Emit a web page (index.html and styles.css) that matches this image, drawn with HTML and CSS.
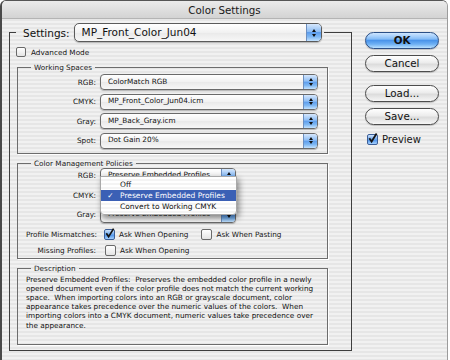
FILE: index.html
```html
<!DOCTYPE html>
<html>
<head>
<meta charset="utf-8">
<title>Color Settings</title>
<link rel="stylesheet" href="styles.css">
</head>
<body>
<div class="window">
  <div class="titlebar">Color Settings</div>
  <div class="content">
    <fieldset class="main">
      <legend class="settings-legend">
        <span class="settings-label">Settings:</span>
        <span class="popup popup-settings"><span class="popup-text">MP_Front_Color_Jun04</span><span class="stepper"><i class="up"></i><i class="down"></i></span></span>
      </legend>
      <div class="check-row adv"><span class="cb"></span><span>Advanced Mode</span></div>

      <fieldset class="group ws">
        <legend>Working Spaces</legend>
        <div class="rows">
          <div class="row"><span class="lbl">RGB:</span><span class="popup popup-wide"><span class="popup-text">ColorMatch RGB</span><span class="stepper"><i class="up"></i><i class="down"></i></span></span></div>
          <div class="row"><span class="lbl">CMYK:</span><span class="popup popup-wide"><span class="popup-text">MP_Front_Color_Jun04.icm</span><span class="stepper"><i class="up"></i><i class="down"></i></span></span></div>
          <div class="row"><span class="lbl">Gray:</span><span class="popup popup-wide"><span class="popup-text">MP_Back_Gray.icm</span><span class="stepper"><i class="up"></i><i class="down"></i></span></span></div>
          <div class="row"><span class="lbl">Spot:</span><span class="popup popup-wide"><span class="popup-text">Dot Gain 20%</span><span class="stepper"><i class="up"></i><i class="down"></i></span></span></div>
        </div>
      </fieldset>

      <fieldset class="group cmp">
        <legend>Color Management Policies</legend>
        <div class="rows">
          <div class="row"><span class="lbl">RGB:</span><span class="popup popup-short"><span class="popup-text">Preserve Embedded Profiles</span><span class="stepper"><i class="up"></i><i class="down"></i></span></span></div>
          <div class="row open"><span class="lbl">CMYK:</span><span class="popup popup-short"><span class="popup-text"></span><span class="stepper"><i class="up"></i><i class="down"></i></span></span>
            <div class="menu">
              <div class="item"><span class="mark"></span>Off</div>
              <div class="item sel"><span class="mark">✓</span>Preserve Embedded Profiles</div>
              <div class="item"><span class="mark"></span>Convert to Working CMYK</div>
            </div>
          </div>
          <div class="row"><span class="lbl">Gray:</span><span class="popup popup-short"><span class="popup-text">Preserve Embedded Profiles</span><span class="stepper"><i class="up"></i><i class="down"></i></span></span></div>
        </div>
        <div class="row chk mism"><span class="lbl">Profile Mismatches:</span><span class="cb on"><svg viewBox="0 0 11 11" width="11" height="11"><path d="M2.3 5.2 L4.6 8.6 L9.6 0.6" fill="none" stroke="#151515" stroke-width="1.7"/></svg></span><span class="opt">Ask When Opening</span><span class="cb"></span><span class="opt">Ask When Pasting</span></div>
        <div class="row chk miss"><span class="lbl">Missing Profiles:</span><span class="cb"></span><span class="opt">Ask When Opening</span></div>
      </fieldset>

      <fieldset class="group desc">
        <legend>Description</legend>
        <p>Preserve Embedded Profiles:&nbsp; Preserves the embedded color profile in a newly<br>opened document even if the color profile does not match the current working<br>space.&nbsp; When importing colors into an RGB or grayscale document, color<br>appearance takes precedence over the numeric values of the colors.&nbsp; When<br>importing colors into a CMYK document, numeric values take precedence over<br>the appearance.</p>
      </fieldset>
    </fieldset>

    <div class="buttons">
      <div class="btn default">OK</div>
      <div class="btn cancel">Cancel</div>
      <div class="btn load">Load...</div>
      <div class="btn save">Save...</div>
      <div class="check-row preview"><span class="cb on big"><svg viewBox="0 0 11 11" width="11" height="11"><path d="M2.3 5.2 L4.6 8.6 L9.6 0.6" fill="none" stroke="#151515" stroke-width="1.8"/></svg></span><span>Preview</span></div>
    </div>
  </div>
</div>
</body>
</html>
```

FILE: styles.css
```css
html, body {
  margin: 0;
  padding: 0;
  background: #ffffff;
}
body {
  width: 450px;
  height: 360px;
  overflow: hidden;
  font-family: "DejaVu Sans", "Liberation Sans", sans-serif;
  color: #161616;
}
.window {
  width: 448px;
  height: 362px;
  box-sizing: border-box;
  border-top: 1px solid #555;
  border-left: 2px solid #4a4a4a;
  border-right: 1px solid #9c9c9c;
  border-radius: 6px 6px 0 0;
  overflow: hidden;
  background: repeating-linear-gradient(to bottom, #f1f1f1 0 2px, #e6e6e6 2px 4px);
}
.titlebar {
  height: 17px;
  border-bottom: 1px solid #b4b4b4;
  background: linear-gradient(#ebebeb, #d3d3d3);
  text-align: center;
  font-size: 10.3px;
  line-height: 18px;
  color: #1a1a1a;
}
.content {
  display: flex;
  align-items: flex-start;
  padding-left: 7px;
}

/* fieldsets */
fieldset {
  margin: 0;
  min-width: 0;
}
.main {
  margin-top: 4px;
  width: 343px;
  height: 328px;
  box-sizing: border-box;
  border: 1px solid #3e3e3e;
  padding: 5px 23px 7px 7px;
}
.settings-legend {
  display: flex;
  align-items: center;
  padding: 0 2px 0 7px;
  margin-left: -1px;
  height: 19px;
}
.settings-label {
  font-size: 10.5px;
  margin-right: 4px;
  color: #111;
}
.group {
  border: 1px solid #6d6d6d;
  box-shadow: 1px 1px 0 #ffffff;
  padding: 0 9px 0 8px;
}
.group legend {
  font-size: 7.3px;
  line-height: 9px;
  height: 9px;
  padding: 0 3px;
  margin-left: 5px;
  color: #1c1c1c;
}
.ws {
  margin-top: 6px;
  padding-top: 2px;
  padding-bottom: 4px;
}
.cmp {
  margin-top: 5px;
  padding-bottom: 1px;
}
.desc {
  margin-top: 5px;
  height: 81px;
  box-sizing: border-box;
  padding-top: 2px;
}
.desc p {
  margin: 0;
  font-size: 7.3px;
  line-height: 9.2px;
  white-space: nowrap;
  color: #111;
}

/* rows */
.rows {
  display: flex;
  flex-direction: column;
  gap: 3.5px;
}
.row {
  display: flex;
  align-items: center;
  gap: 4px;
  font-size: 7.3px;
}
.lbl {
  width: 70px;
  flex: none;
  text-align: right;
  white-space: nowrap;
}
.open {
  position: relative;
}

/* popup buttons */
.popup {
  display: flex;
  align-items: center;
  height: 16px;
  box-sizing: border-box;
  border: 1px solid #6a6a6a;
  border-radius: 4px;
  background: linear-gradient(#ffffff, #f1f1f1 50%, #e9e9e9 51%, #f7f7f7);
  box-shadow: 0 1px 1px rgba(0, 0, 0, 0.25);
  padding-left: 7px;
  overflow: hidden;
  font-size: 7.3px;
  color: #111;
}
.popup-text {
  flex: 1;
  white-space: nowrap;
  overflow: hidden;
  line-height: 1.45;
}
.popup-wide { width: 218px; }
.popup-short { width: 136px; }
.popup-settings {
  width: 248px;
  height: 19px;
  border-radius: 5px;
  font-size: 10.5px;
  padding-left: 7px;
  border-color: #5a5a5a;
}
.stepper {
  align-self: stretch;
  width: 13px;
  flex: none;
  background: linear-gradient(#d6e7fc, #8dbdf4 45%, #5d9ded 50%, #7fb8f3 75%, #c3e2ff);
  border-left: 1px solid #6c8fc0;
  display: flex;
  flex-direction: column;
  align-items: center;
  justify-content: center;
  gap: 1.5px;
}
.popup-settings .stepper { width: 14px; gap: 2px; }
.up, .down {
  display: block;
  width: 0;
  height: 0;
  border-left: 2.5px solid transparent;
  border-right: 2.5px solid transparent;
}
.up { border-bottom: 3px solid #111; }
.down { border-top: 3px solid #111; }

/* menu */
.menu {
  position: absolute;
  left: 74px;
  top: -11px;
  width: 137px;
  box-sizing: border-box;
  padding: 2px 0;
  background: repeating-linear-gradient(to bottom, #ffffff 0 2px, #f4f4f4 2px 4px);
  border: 1px solid #a9a9a9;
  border-radius: 0 0 4px 4px;
  box-shadow: 2px 3px 6px rgba(0, 0, 0, 0.45);
  z-index: 5;
}
.item {
  display: flex;
  height: 11px;
  line-height: 11px;
  font-size: 7.5px;
  color: #111;
  white-space: nowrap;
}
.item .mark {
  width: 19px;
  text-align: center;
  flex: none;
}
.item.sel {
  background: #3b60b5;
  color: #ffffff;
}

/* checkboxes */
.check-row {
  display: flex;
  align-items: center;
  gap: 5px;
  font-size: 7.3px;
}
.adv {
  height: 10px;
  margin-left: -1px;
}
.cb {
  width: 10px;
  height: 10px;
  flex: none;
  box-sizing: border-box;
  border: 1px solid #6a6a6a;
  border-radius: 2px;
  background: linear-gradient(#ffffff, #e4e4e4);
  position: relative;
}
.cb svg {
  position: absolute;
  left: -1px;
  top: -2px;
}
.cb.on {
  border-color: #3c5f98;
  background: linear-gradient(#cfe3fb, #6aa6ee 50%, #4d92ea 55%, #a7d2ff);
}
.chk .cb {
  width: 11px;
  height: 11px;
  margin-left: 4px;
}
.chk .opt {
  margin-left: 0;
  margin-right: 5px;
  white-space: nowrap;
}
.mism {
  margin-top: 6px;
  height: 12px;
}
.miss {
  margin-top: 4px;
  height: 12px;
}
.miss .cb { margin-left: 5px; }

/* buttons */
.buttons {
  margin-left: 13px;
  margin-top: 13px;
  width: 74px;
  display: flex;
  flex-direction: column;
}
.btn {
  height: 17px;
  box-sizing: border-box;
  border: 1px solid #4c4c4c;
  border-radius: 9px;
  background: linear-gradient(#ffffff, #ececec 45%, #dcdcdc 55%, #f6f6f6);
  box-shadow: 0 1px 1px rgba(0, 0, 0, 0.2);
  text-align: center;
  font-size: 10.3px;
  line-height: 15px;
  color: #111;
}
.btn.default {
  border-color: #2b4f86;
  background: linear-gradient(#cfe6ff, #86bdf7 40%, #4a94ea 50%, #6fb1f4 75%, #b9e0ff);
  font-weight: bold;
  margin-bottom: 6px;
}
.btn.cancel { margin-bottom: 13px; }
.btn.load { margin-bottom: 6px; }
.btn.save { margin-bottom: 8px; }
.preview {
  margin-left: 2px;
  font-size: 10px;
  gap: 4px;
  height: 12px;
}
.preview .cb {
  width: 11px;
  height: 11px;
}
```
